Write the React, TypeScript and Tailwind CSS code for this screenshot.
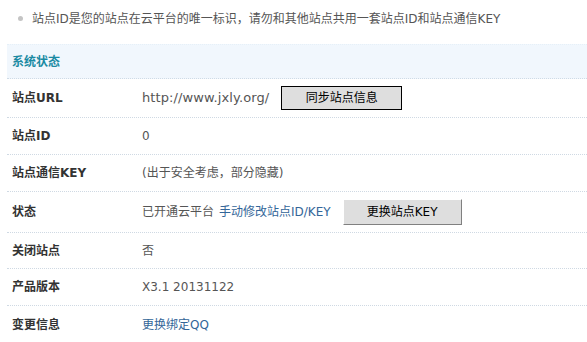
import React from "react";

const font = { fontFamily: '"DejaVu Sans", "Noto Sans CJK SC", sans-serif' };

function Row({
  label,
  h,
  children,
  last,
}: {
  label: string;
  h: string;
  children: React.ReactNode;
  last?: boolean;
}) {
  return (
    <div
      className={`flex items-center ${h} ${last ? "" : "border-b border-dotted border-[#cfd9e3]"}`}
    >
      <div className="w-[135px] shrink-0 pl-[5px] font-bold text-[#333]">{label}</div>
      <div className="flex items-center text-[#555]">{children}</div>
    </div>
  );
}

export default function App() {
  return (
    <div
      className="w-[587px] h-[342px] overflow-hidden bg-white text-[12px] leading-[14px]"
      style={font}
    >
      <div className="flex items-center h-[36px] pt-[1px] pl-[18px]">
        <span className="w-[5px] h-[5px] rounded-full bg-[#c4c4c4] mr-[9px]" />
        <span className="text-[#555]">
          站点ID是您的站点在云平台的唯一标识，请勿和其他站点共用一套站点ID和站点通信KEY
        </span>
      </div>
      <div className="ml-[7px] mt-[8px]">
        <div className="flex items-center h-[35px] bg-[#f1f7fd] border-t border-[#e6f0f8] border-b border-dotted border-b-[#cfdbe6] pl-[5px]">
          <span className="font-bold text-[#1a8aa3]">系统状态</span>
        </div>
        <Row label="站点URL" h="h-[39px]">
          <span className="text-[13px] tracking-[0.1px]">http://www.jxly.org/</span>
          <button className="ml-[12px] w-[121px] h-[24px] bg-[#dedede] border border-black text-black text-[12px]">
            同步站点信息
          </button>
        </Row>
        <Row label="站点ID" h="h-[37px]">
          <span>0</span>
        </Row>
        <Row label="站点通信KEY" h="h-[37px]">
          <span>(出于安全考虑，部分隐藏)</span>
        </Row>
        <Row label="状态" h="h-[41px]">
          <span>已开通云平台</span>
          <span className="ml-[5px] text-[#336699]">手动修改站点ID/KEY</span>
          <button className="ml-[12px] w-[119px] h-[26px] bg-[#dedede] border border-t-white border-l-white border-r-[#808080] border-b-[#808080] text-black text-[12px]">
            更换站点KEY
          </button>
        </Row>
        <Row label="关闭站点" h="h-[36px]">
          <span>否</span>
        </Row>
        <Row label="产品版本" h="h-[37px]">
          <span>X3.1 20131122</span>
        </Row>
        <Row label="变更信息" h="h-[37px]" last>
          <span className="text-[#336699]">更换绑定QQ</span>
        </Row>
      </div>
    </div>
  );
}
